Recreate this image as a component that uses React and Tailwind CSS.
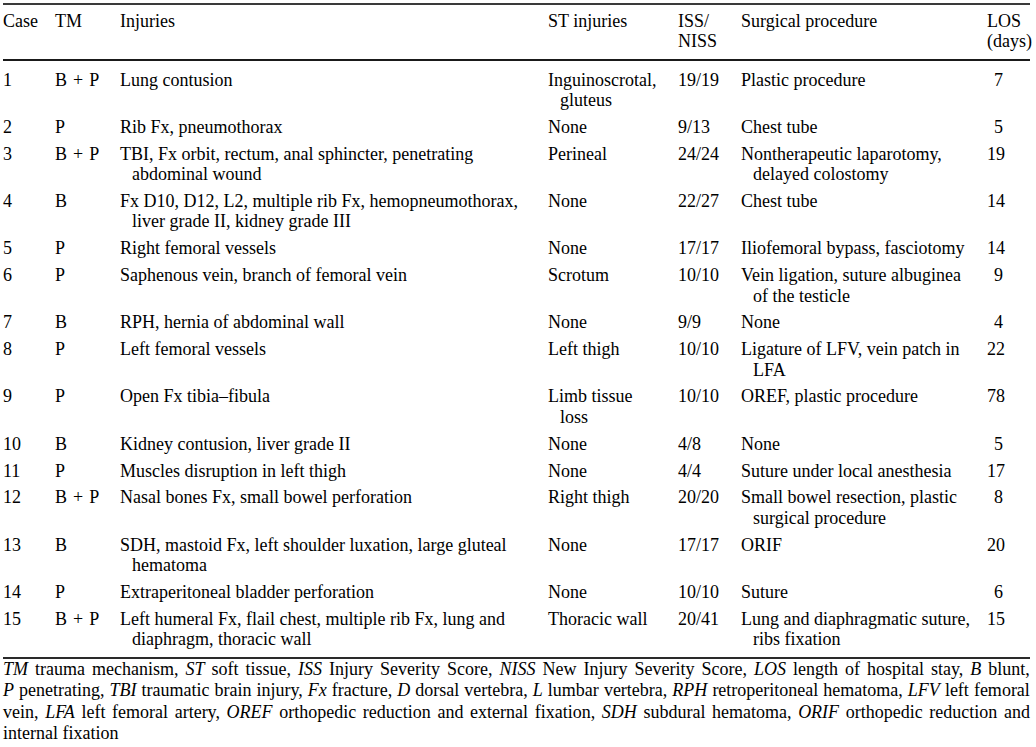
import React from "react";

const rows = [
  ["1", "B + P", ["Lung contusion"], ["Inguinoscrotal,", "gluteus"], "19/19", ["Plastic procedure"], "7"],
  ["2", "P", ["Rib Fx, pneumothorax"], ["None"], "9/13", ["Chest tube"], "5"],
  ["3", "B + P", ["TBI, Fx orbit, rectum, anal sphincter, penetrating", "abdominal wound"], ["Perineal"], "24/24", ["Nontherapeutic laparotomy,", "delayed colostomy"], "19"],
  ["4", "B", ["Fx D10, D12, L2, multiple rib Fx, hemopneumothorax,", "liver grade II, kidney grade III"], ["None"], "22/27", ["Chest tube"], "14"],
  ["5", "P", ["Right femoral vessels"], ["None"], "17/17", ["Iliofemoral bypass, fasciotomy"], "14"],
  ["6", "P", ["Saphenous vein, branch of femoral vein"], ["Scrotum"], "10/10", ["Vein ligation, suture albuginea", "of the testicle"], "9"],
  ["7", "B", ["RPH, hernia of abdominal wall"], ["None"], "9/9", ["None"], "4"],
  ["8", "P", ["Left femoral vessels"], ["Left thigh"], "10/10", ["Ligature of LFV, vein patch in", "LFA"], "22"],
  ["9", "P", ["Open Fx tibia\u2013fibula"], ["Limb tissue", "loss"], "10/10", ["OREF, plastic procedure"], "78"],
  ["10", "B", ["Kidney contusion, liver grade II"], ["None"], "4/8", ["None"], "5"],
  ["11", "P", ["Muscles disruption in left thigh"], ["None"], "4/4", ["Suture under local anesthesia"], "17"],
  ["12", "B + P", ["Nasal bones Fx, small bowel perforation"], ["Right thigh"], "20/20", ["Small bowel resection, plastic", "surgical procedure"], "8"],
  ["13", "B", ["SDH, mastoid Fx, left shoulder luxation, large gluteal", "hematoma"], ["None"], "17/17", ["ORIF"], "20"],
  ["14", "P", ["Extraperitoneal bladder perforation"], ["None"], "10/10", ["Suture"], "6"],
  ["15", "B + P", ["Left humeral Fx, flail chest, multiple rib Fx, lung and", "diaphragm, thoracic wall"], ["Thoracic wall"], "20/41", ["Lung and diaphragmatic suture,", "ribs fixation"], "15"],
];

const grid = "grid grid-cols-[52px_65px_428px_130px_63px_246px_43px]";

function Lines({ lines }) {
  return (
    <div>
      {lines.map((l, i) => (
        <div key={i} className={i === 0 ? "whitespace-nowrap" : "whitespace-nowrap pl-3"}>
          {l}
        </div>
      ))}
    </div>
  );
}

function TM({ v }) {
  if (v === "B + P") {
    return (
      <div className="whitespace-nowrap">
        B<span className="mx-[6px]">+</span>P
      </div>
    );
  }
  return <div className="whitespace-nowrap">{v}</div>;
}

function I({ children }) {
  return <i className="italic">{children}</i>;
}

export default function App() {
  return (
    <div className="bg-white min-h-[747px] w-[1036px] text-black font-['Liberation_Serif',serif] text-[18px] leading-[20.5px]">
      <div className="ml-[3px] w-[1027px] pt-[3px]">
        <div className="border-t-2 border-[#3a3a3a]" />
        <div className={`${grid} pt-[5.6px] pb-[7.4px] border-b-2 border-[#1a1a1a]`}>
          <div>Case</div>
          <div>TM</div>
          <div>Injuries</div>
          <div>ST injuries</div>
          <div>
            <div>ISS/</div>
            <div>NISS</div>
          </div>
          <div>Surgical procedure</div>
          <div className="whitespace-nowrap">
            <div>LOS</div>
            <div>(days)</div>
          </div>
        </div>
        <div className="pt-[5.6px] pb-[4px] border-b-2 border-[#2a2a2a]">
          {rows.map((r) => (
            <div key={r[0]} className={`${grid} pt-[3px] pb-[3.3px]`}>
              <div>{r[0]}</div>
              <TM v={r[1]} />
              <Lines lines={r[2]} />
              <Lines lines={r[3]} />
              <div>{r[4]}</div>
              <Lines lines={r[5]} />
              <div className="text-right pr-[27px]">{r[6]}</div>
            </div>
          ))}
        </div>
        <div className="leading-[21.3px] pt-0">
          <div className="whitespace-nowrap flex justify-between">
            <span><I>TM</I></span><span>trauma</span><span>mechanism,</span><span><I>ST</I></span><span>soft</span><span>tissue,</span><span><I>ISS</I></span><span>Injury</span><span>Severity</span><span>Score,</span><span><I>NISS</I></span><span>New</span><span>Injury</span><span>Severity</span><span>Score,</span><span><I>LOS</I></span><span>length</span><span>of</span><span>hospital</span><span>stay,</span><span><I>B</I></span><span>blunt,</span>
          </div>
          <div className="whitespace-nowrap flex justify-between">
            <span><I>P</I></span><span>penetrating,</span><span><I>TBI</I></span><span>traumatic</span><span>brain</span><span>injury,</span><span><I>Fx</I></span><span>fracture,</span><span><I>D</I></span><span>dorsal</span><span>vertebra,</span><span><I>L</I></span><span>lumbar</span><span>vertebra,</span><span><I>RPH</I></span><span>retroperitoneal</span><span>hematoma,</span><span><I>LFV</I></span><span>left</span><span>femoral</span>
          </div>
          <div className="whitespace-nowrap flex justify-between">
            <span>vein,</span><span><I>LFA</I></span><span>left</span><span>femoral</span><span>artery,</span><span><I>OREF</I></span><span>orthopedic</span><span>reduction</span><span>and</span><span>external</span><span>fixation,</span><span><I>SDH</I></span><span>subdural</span><span>hematoma,</span><span><I>ORIF</I></span><span>orthopedic</span><span>reduction</span><span>and</span>
          </div>
          <div>internal fixation</div>
        </div>
      </div>
    </div>
  );
}
